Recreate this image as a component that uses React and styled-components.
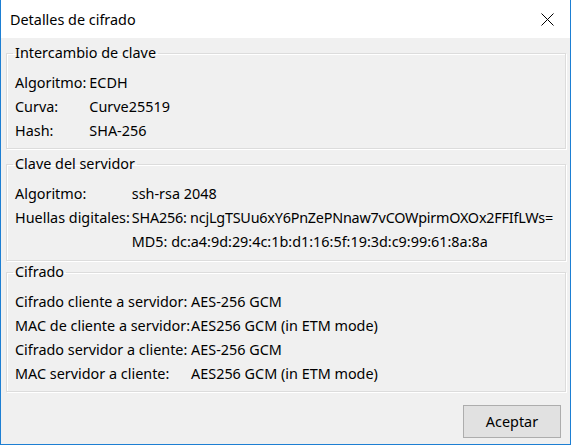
import React from 'react'
import styled, { createGlobalStyle } from 'styled-components'

const GlobalStyle = createGlobalStyle`
  html, body {
    margin: 0;
    padding: 0;
    background: #ffffff;
  }
  body {
    font-family: 'Noto Sans', 'Open Sans', sans-serif;
    font-size: 14.4px;
    color: #000000;
  }
`

const Window = styled.div`
  width: 571px;
  height: 445px;
  box-sizing: border-box;
  display: flex;
  flex-direction: column;
  border: 1px solid #1d7fd3;
  border-top: none;
  background: #f0f0f0;
`

const TitleBar = styled.div`
  height: 38px;
  flex-shrink: 0;
  background: #ffffff;
  display: flex;
  align-items: center;
  justify-content: space-between;
  padding: 0 11px 0 9px;
`

const Title = styled.div`
  color: #000000;
`

const CloseButton = styled.div`
  width: 24px;
  height: 24px;
  display: flex;
  align-items: center;
  justify-content: center;
`

const Content = styled.div`
  flex: 1;
  display: flex;
  flex-direction: column;
  padding: 5px 4px 0 5px;
`

const Group = styled.fieldset`
  margin: 0 0 ${p => p.$gap || 0}px 0;
  padding: 8px 8px ${p => p.$bottom || 5}px 8px;
  border: 1px solid #dcdcdc;
  border-radius: 0;
  box-shadow: inset 1px 1px 0 #ffffff, 1px 1px 0 #ffffff;
`

const Legend = styled.legend`
  padding: 0 2px;
  margin-left: -2px;
  line-height: 20px;
  color: #000000;
`

const Rows = styled.div`
  display: grid;
  grid-template-columns: auto 1fr;
  column-gap: ${p => p.$gap || 3}px;
  line-height: 24px;
  white-space: nowrap;
`

const Label = styled.div``

const Value = styled.div`
  letter-spacing: ${p => (p.$tight ? '-0.22px' : 'normal')};
`

const Footer = styled.div`
  display: flex;
  justify-content: flex-end;
  padding: 13px 5px 0 0;
`

const Button = styled.button`
  width: 98px;
  height: 33px;
  font-family: inherit;
  font-size: inherit;
  background: #e1e1e1;
  border: 1px solid #adadad;
  color: #000000;
  padding: 0;
`

const CloseIcon = () => (
  <svg width="13" height="13" viewBox="0 0 13 13">
    <path d="M0.5 0.5 L12.5 12.5 M12.5 0.5 L0.5 12.5" stroke="#000000" strokeWidth="1" fill="none" />
  </svg>
)

const App = () => {
  return (
    <>
      <GlobalStyle />
      <Window>
        <TitleBar>
          <Title>Detalles de cifrado</Title>
          <CloseButton>
            <CloseIcon />
          </CloseButton>
        </TitleBar>
        <Content>
          <Group $gap={5}>
            <Legend>Intercambio de clave</Legend>
            <Rows>
              <Label>Algoritmo:</Label>
              <Value>ECDH</Value>
              <Label>Curva:</Label>
              <Value>Curve25519</Value>
              <Label>Hash:</Label>
              <Value>SHA-256</Value>
            </Rows>
          </Group>
          <Group $gap={1} $bottom={6}>
            <Legend>Clave del servidor</Legend>
            <Rows $gap={2}>
              <Label>Algoritmo:</Label>
              <Value>ssh-rsa 2048</Value>
              <Label>Huellas digitales:</Label>
              <Value $tight>SHA256: ncjLgTSUu6xY6PnZePNnaw7vCOWpirmOXOx2FFIfLWs=</Value>
              <Label />
              <Value>MD5: dc:a4:9d:29:4c:1b:d1:16:5f:19:3d:c9:99:61:8a:8a</Value>
            </Rows>
          </Group>
          <Group>
            <Legend>Cifrado</Legend>
            <Rows $gap={1}>
              <Label>Cifrado cliente a servidor:</Label>
              <Value>AES-256 GCM</Value>
              <Label>MAC de cliente a servidor:</Label>
              <Value>AES256 GCM (in ETM mode)</Value>
              <Label>Cifrado servidor a cliente:</Label>
              <Value>AES-256 GCM</Value>
              <Label>MAC servidor a cliente:</Label>
              <Value>AES256 GCM (in ETM mode)</Value>
            </Rows>
          </Group>
          <Footer>
            <Button>Aceptar</Button>
          </Footer>
        </Content>
      </Window>
    </>
  )
}

export default App
